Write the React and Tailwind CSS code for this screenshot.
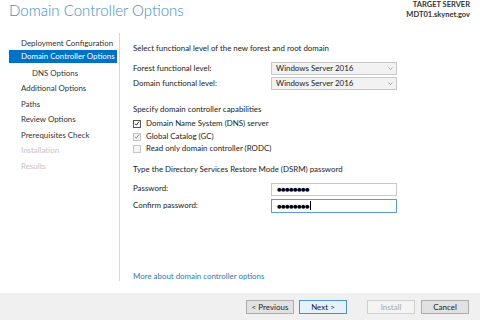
import React from "react";

const FONT = { fontFamily: 'Lato, "Open Sans", sans-serif' };

const NAV = [
  { label: "Deployment Configuration", cls: "mt-[4px]" },
  { label: "Domain Controller Options", active: true },
  { label: "DNS Options", sub: true, cls: "mt-[4px]" },
  { label: "Additional Options" },
  { label: "Paths" },
  { label: "Review Options" },
  { label: "Prerequisites Check" },
  { label: "Installation", disabled: true },
  { label: "Results", disabled: true },
];

const Select = ({ value }) => (
  <div className="w-[126px] h-[13px] border border-[#c8c8c8] bg-[#f2f2f2] flex items-center justify-between pl-[4px] pr-[3px]">
    <span className="text-[7.9px] text-[#222]">{value}</span>
    <svg width="5" height="3" viewBox="0 0 5 3">
      <path d="M0.5 0.5 L2.5 2.5 L4.5 0.5" fill="none" stroke="#9a9a9a" strokeWidth="0.8" />
    </svg>
  </div>
);

const Check = ({ checked, disabled, label }) => (
  <div className="h-[12.7px] flex items-center gap-[5px]">
    <div
      className={
        "w-[8px] h-[8px] border flex items-center justify-center " +
        (disabled ? "border-[#c4c4c4] bg-[#f4f4f4]" : "border-[#555] bg-white")
      }
    >
      {checked && (
        <svg width="7" height="7" viewBox="0 0 7 7">
          <path d="M1 3.6 L2.7 5.3 L6 1.2" fill="none" stroke={disabled ? "#8a8a8a" : "#222"} strokeWidth="1.1" />
        </svg>
      )}
    </div>
    <span className="text-[#222]">{label}</span>
  </div>
);

const Field = ({ label, focused, caret }) => (
  <div className="flex items-center">
    <span className="w-[138px] text-[#222]">{label}</span>
    <div
      className={
        "w-[126px] h-[13.5px] border bg-white flex items-center pl-[5px] " +
        (focused ? "border-[#5b9bd5]" : "border-[#c8c8c8]")
      }
    >
      <span className="text-[8px] leading-none text-black tracking-[-0.8px]">●●●●●●●●</span>
      {caret && <span className="w-px h-[9px] bg-black ml-[1px]" />}
    </div>
  </div>
);

const Button = ({ children, variant }) => {
  const styles = {
    normal: "border-[#adadad] bg-[#e1e1e1] text-[#222]",
    primary: "border-[#4a8fd0] bg-[#e5f1fb] text-[#222]",
    disabled: "border-[#cfcfcf] bg-[#f4f4f4] text-[#a8a8a8]",
  };
  return (
    <div className={"w-[48px] h-[14px] border flex items-center justify-center text-[8px] " + styles[variant]}>
      {children}
    </div>
  );
};

export default function App() {
  return (
    <div className="w-[480px] h-[320px] bg-white flex flex-col overflow-hidden" style={FONT}>
      {/* Header */}
      <div className="h-[33px] flex justify-between shrink-0">
        <h1 className="pl-[9px] pt-[0px] text-[15px] leading-[20px] font-light text-[#3b8ec2]">
          Domain Controller Options
        </h1>
        <div className="pr-[10px] text-right text-[7.5px] leading-[10px] font-bold text-[#333]">
          <div>TARGET SERVER</div>
          <div>MDT01.skynet.gov</div>
        </div>
      </div>

      {/* Body */}
      <div className="flex-1 flex">
        <div className="w-[120px] mb-[12px] border-r border-[#d6d6d6] pl-[9px] flex flex-col">
          {NAV.map((n, i) => (
            <div
              key={i}
              className={
                "h-[13px] flex items-center text-[7.9px] whitespace-nowrap " +
                (n.sub ? "pl-[23px] " : "pl-[12px] ") +
                (n.active ? "bg-[#0072c6] text-white mr-[2px] " : n.disabled ? "text-[#c4c4c4] " : "text-[#333] ") +
                (n.cls ? n.cls : i > 2 ? "mt-[2.5px]" : "")
              }
            >
              {n.label}
            </div>
          ))}
        </div>

        <div className="flex-1 pl-[13px] flex flex-col text-[7.9px] text-[#222]">
          <div className="h-[13px] mt-[9.5px] flex items-center">
            Select functional level of the new forest and root domain
          </div>
          <div className="mt-[6.5px] flex flex-col gap-[2px]">
            <div className="flex items-center">
              <span className="w-[138px]">Forest functional level:</span>
              <Select value="Windows Server 2016" />
            </div>
            <div className="flex items-center">
              <span className="w-[138px]">Domain functional level:</span>
              <Select value="Windows Server 2016" />
            </div>
          </div>

          <div className="h-[13px] mt-[13.5px] flex items-center">Specify domain controller capabilities</div>
          <div className="mt-[1px] flex flex-col">
            <Check checked label="Domain Name System (DNS) server" />
            <Check checked disabled label="Global Catalog (GC)" />
            <Check disabled label="Read only domain controller (RODC)" />
          </div>

          <div className="h-[13px] mt-[7.5px] flex items-center">
            Type the Directory Services Restore Mode (DSRM) password
          </div>
          <div className="mt-[6.5px] flex flex-col gap-[3px]">
            <Field label="Password:" />
            <Field label="Confirm password:" focused caret />
          </div>

          <div className="h-[13px] mt-[58px] flex items-center text-[#2a78b8]">
            More about domain controller options
          </div>
        </div>
      </div>

      {/* Footer */}
      <div className="h-[27px] shrink-0 bg-[#f0f0f0] flex items-center justify-end pr-[11px] pt-[1px]">
        <div className="flex gap-[5px]">
          <Button variant="normal">&lt; Previous</Button>
          <Button variant="primary">Next &gt;</Button>
        </div>
        <div className="flex gap-[6px] ml-[20px]">
          <Button variant="disabled">Install</Button>
          <Button variant="normal">Cancel</Button>
        </div>
      </div>
    </div>
  );
}
